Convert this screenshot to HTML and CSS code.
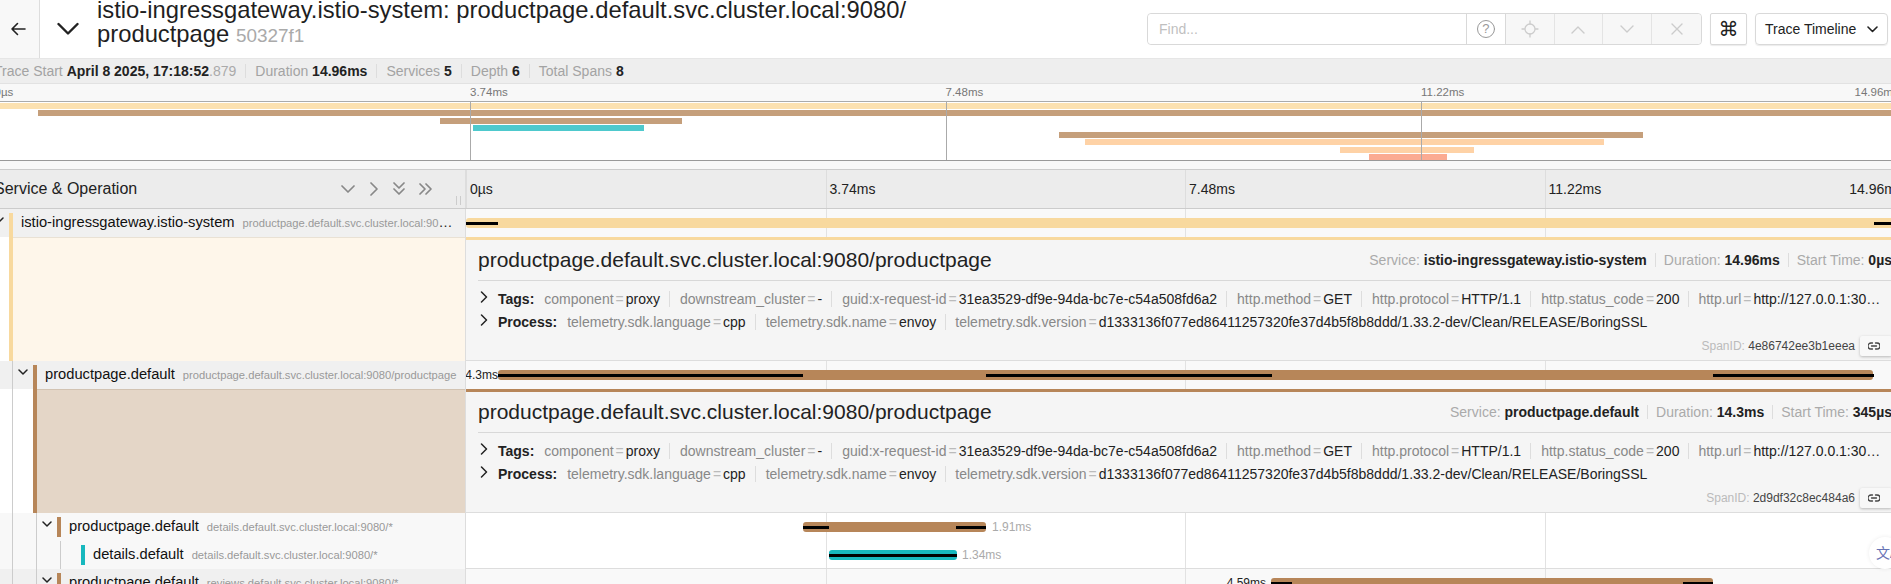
FILE: index.html
```html
<!DOCTYPE html>
<html lang="en">
<head>
<meta charset="utf-8">
<title>Trace Timeline</title>
<link rel="stylesheet" href="styles.css">
</head>
<body>
<div class="page">
  <header class="top">
    <a class="back"><svg width="16" height="14" viewBox="0 0 16 14"><path d="M15 7H2M7.5 1.5 2 7l5.5 5.5" class="ic" stroke="#222" stroke-width="1.6"/></svg></a>
    <span class="collapse"><svg width="22" height="14" viewBox="0 0 22 14"><path d="M1.5 2 11 11.5 20.5 2" class="ic" stroke="#222" stroke-width="2.4"/></svg></span>
    <h1 class="title">istio-ingressgateway.istio-system: productpage.default.svc.cluster.local:9080/<br>productpage <small class="trace-id">50327f1</small></h1>
    <div class="find">
      <span class="find-input">Find...</span>
      <span class="find-help"><svg width="20" height="20" viewBox="0 0 20 20"><circle cx="10" cy="10" r="8.5" class="ic" stroke="#999"/></svg><i class="qmark">?</i></span>
      <span class="find-btn wide"><svg width="18" height="18" viewBox="0 0 18 18"><path d="M9 1v3M9 14v3M1 9h2.500M14.500 9H17" class="ic" stroke="#ccc" stroke-width="1.300"/><circle cx="9" cy="9" r="5" class="ic" stroke="#ccc" stroke-width="1.300"/></svg></span>
      <span class="find-btn wide"><svg width="14" height="9" viewBox="0 0 14 9"><path d="M1 8 7 2l6 6" class="ic" stroke="#ccc" stroke-width="1.400"/></svg></span>
      <span class="find-btn wide"><svg width="14" height="9" viewBox="0 0 14 9"><path d="M1 1l6 6 6-6" class="ic" stroke="#ccc" stroke-width="1.400"/></svg></span>
      <span class="find-btn wide last"><svg width="12" height="12" viewBox="0 0 12 12"><path d="M1 1l10 10M11 1 1 11" class="ic" stroke="#ccc" stroke-width="1.400"/></svg></span>
    </div>
    <span class="cmd">⌘</span>
    <span class="view-select">Trace Timeline<svg width="11" height="7" viewBox="0 0 11 7"><path d="M1 1l4.500 4.500L10 1" class="ic" stroke="#222" stroke-width="1.600"/></svg></span>
  </header>

  <div class="summary">
    <span class="fact">Trace Start <b>April 8 2025, 17:18:52</b><span class="ms">.879</span></span>
    <span class="fact">Duration <b>14.96ms</b></span>
    <span class="fact">Services <b>5</b></span>
    <span class="fact">Depth <b>6</b></span>
    <span class="fact last">Total Spans <b>8</b></span>
  </div>

  <div class="mini">
    <div class="mini-ticks">
      <span class="mini-tick">0µs</span><span class="mini-tick">3.74ms</span><span class="mini-tick">7.48ms</span><span class="mini-tick">11.22ms</span><span class="mini-tick end">14.96ms</span>
    </div>
    <div class="mini-canvas">
      <i class="mini-line q1"></i><i class="mini-line q2"></i><i class="mini-line q3"></i>
      <div class="mini-bar c-gold" style="margin-left:0;width:100%"></div>
      <div class="mini-bar c-brown" style="margin-left:2.3%;width:97.89%"></div>
      <div class="mini-bar c-brown" style="margin-left:23.42%;width:12.75%"></div>
      <div class="mini-bar c-teal" style="margin-left:25.17%;width:8.99%"></div>
      <div class="mini-bar c-brown" style="margin-left:55.96%;width:30.7%"></div>
      <div class="mini-bar c-peach" style="margin-left:57.33%;width:27.3%"></div>
      <div class="mini-bar c-peach" style="margin-left:70.75%;width:7.05%"></div>
      <div class="mini-bar c-salmon" style="margin-left:72.27%;width:4.1%"></div>
    </div>
    <div class="mini-foot"></div>
  </div>

  <div class="tl-head">
    <div class="tl-head-left">
      <h3 class="tl-title">Service &amp; Operation</h3>
      <span class="tl-tools">
        <svg width="14" height="10" viewBox="0 0 14 10"><path d="M1 2l6 6 6-6" class="ic" stroke="#888" stroke-width="1.700"/></svg>
        <svg width="10" height="14" viewBox="0 0 10 14"><path d="M2 1l6 6-6 6" class="ic" stroke="#888" stroke-width="1.700"/></svg>
        <svg width="12" height="14" viewBox="0 0 12 14"><path d="M1 1l5 5 5-5M1 7l5 5 5-5" class="ic" stroke="#888" stroke-width="1.700"/></svg>
        <svg width="14" height="12" viewBox="0 0 14 12"><path d="M1 1l5 5-5 5M7 1l5 5-5 5" class="ic" stroke="#888" stroke-width="1.700"/></svg>
      </span>
      <i class="resizer"></i>
    </div>
    <div class="tl-head-right">
      <span class="tl-tick">0µs</span><span class="tl-tick">3.74ms</span><span class="tl-tick">7.48ms</span><span class="tl-tick">11.22ms</span>
      <span class="tl-tick-end">14.96ms</span>
    </div>
  </div>

  <div class="row shade">
    <div class="left">
      <span class="toggle"><svg width="10" height="7" viewBox="0 0 10 7"><path d="M1 1l4 4 4-4" class="ic" stroke="#222" stroke-width="1.500"/></svg></span>
      <i class="marker open c-gold-solid"></i>
      <span class="label"><span class="name">istio-ingressgateway.istio-system</span><span class="op">productpage.default.svc.cluster.local:9080/productpage</span></span>
    </div>
    <div class="right alt">
      <i class="grid g1"></i><i class="grid g2"></i><i class="grid g3"></i>
      <div class="bar c-gold-solid" style="left:0;width:1438px"></div>
      <i class="crit" style="left:0;width:32px"></i>
      <i class="crit" style="left:1408px;width:30px"></i>
    </div>
  </div>
  <div class="row detail-row">
    <div class="left detail-left">
      <span class="toggle"></span>
      <i class="marker full c-gold-solid"></i>
      <span class="fill fill-gold"></span>
    </div>
    <div class="detail b-gold">
      <div class="d-head">
        <h2 class="d-title">productpage.default.svc.cluster.local:9080/productpage</h2>
        <div class="d-meta">
          <span class="meta">Service: <b>istio-ingressgateway.istio-system</b></span>
          <span class="meta">Duration: <b>14.96ms</b></span>
          <span class="meta last">Start Time: <b>0µs</b></span>
        </div>
      </div>
      <div class="kv">
        <svg class="kv-chev" width="8" height="12" viewBox="0 0 8 12"><path d="M1.500 1l5 5-5 5" class="ic" stroke="#222" stroke-width="1.500"/></svg>
        <b class="kv-label">Tags:</b>
        <span class="pair"><em>component</em><u>=</u>proxy</span>
        <span class="pair"><em>downstream_cluster</em><u>=</u>-</span>
        <span class="pair"><em>guid:x-request-id</em><u>=</u>31ea3529-df9e-94da-bc7e-c54a508fd6a2</span>
        <span class="pair"><em>http.method</em><u>=</u>GET</span>
        <span class="pair"><em>http.protocol</em><u>=</u>HTTP/1.1</span>
        <span class="pair"><em>http.status_code</em><u>=</u>200</span>
        <span class="pair last"><em>http.url</em><u>=</u>http://127.0.0.1:30…</span>
      </div>
      <div class="kv">
        <svg class="kv-chev" width="8" height="12" viewBox="0 0 8 12"><path d="M1.500 1l5 5-5 5" class="ic" stroke="#222" stroke-width="1.500"/></svg>
        <b class="kv-label">Process:</b>
        <span class="pair"><em>telemetry.sdk.language</em><u>=</u>cpp</span>
        <span class="pair"><em>telemetry.sdk.name</em><u>=</u>envoy</span>
        <span class="pair last"><em>telemetry.sdk.version</em><u>=</u>d1333136f077ed86411257320fe37d4b5f8b8ddd/1.33.2-dev/Clean/RELEASE/BoringSSL</span>
      </div>
      <div class="d-foot">
        <span class="span-id"><span class="span-id-key">SpanID:</span> 4e86742ee3b1eeea</span>
        <span class="link-btn"><svg width="12" height="8" viewBox="0 0 12 8"><path d="M4.500 1H3a3 3 0 0 0 0 6h1.500M7.500 1H9a3 3 0 0 1 0 6H7.500M3.500 4h5" class="ic" stroke="#444" stroke-width="1.300"/></svg></span>
      </div>
    </div>
  </div>

  <div class="row shade">
    <div class="left">
      <i class="guide"></i>
      <span class="toggle"><svg width="10" height="7" viewBox="0 0 10 7"><path d="M1 1l4 4 4-4" class="ic" stroke="#222" stroke-width="1.500"/></svg></span>
      <i class="marker open c-brown-solid"></i>
      <span class="label"><span class="name">productpage.default</span><span class="op">productpage.default.svc.cluster.local:9080/productpage</span></span>
    </div>
    <div class="right alt">
      <i class="grid g1"></i><i class="grid g2"></i><i class="grid g3"></i>
      <span class="dur dark" style="right:1406px">14.3ms</span>
      <div class="bar c-brown-solid" style="left:32px;width:1375px"></div>
      <i class="crit" style="left:32px;width:305px"></i>
      <i class="crit" style="left:520px;width:286px"></i>
      <i class="crit" style="left:1247px;width:161px"></i>
    </div>
  </div>
  <div class="row detail-row">
    <div class="left detail-left">
      <i class="guide"></i>
      <span class="toggle"></span>
      <i class="marker full c-brown-solid"></i>
      <span class="fill fill-brown"></span>
    </div>
    <div class="detail b-brown">
      <div class="d-head">
        <h2 class="d-title">productpage.default.svc.cluster.local:9080/productpage</h2>
        <div class="d-meta">
          <span class="meta">Service: <b>productpage.default</b></span>
          <span class="meta">Duration: <b>14.3ms</b></span>
          <span class="meta last">Start Time: <b>345µs</b></span>
        </div>
      </div>
      <div class="kv">
        <svg class="kv-chev" width="8" height="12" viewBox="0 0 8 12"><path d="M1.500 1l5 5-5 5" class="ic" stroke="#222" stroke-width="1.500"/></svg>
        <b class="kv-label">Tags:</b>
        <span class="pair"><em>component</em><u>=</u>proxy</span>
        <span class="pair"><em>downstream_cluster</em><u>=</u>-</span>
        <span class="pair"><em>guid:x-request-id</em><u>=</u>31ea3529-df9e-94da-bc7e-c54a508fd6a2</span>
        <span class="pair"><em>http.method</em><u>=</u>GET</span>
        <span class="pair"><em>http.protocol</em><u>=</u>HTTP/1.1</span>
        <span class="pair"><em>http.status_code</em><u>=</u>200</span>
        <span class="pair last"><em>http.url</em><u>=</u>http://127.0.0.1:30…</span>
      </div>
      <div class="kv">
        <svg class="kv-chev" width="8" height="12" viewBox="0 0 8 12"><path d="M1.500 1l5 5-5 5" class="ic" stroke="#222" stroke-width="1.500"/></svg>
        <b class="kv-label">Process:</b>
        <span class="pair"><em>telemetry.sdk.language</em><u>=</u>cpp</span>
        <span class="pair"><em>telemetry.sdk.name</em><u>=</u>envoy</span>
        <span class="pair last"><em>telemetry.sdk.version</em><u>=</u>d1333136f077ed86411257320fe37d4b5f8b8ddd/1.33.2-dev/Clean/RELEASE/BoringSSL</span>
      </div>
      <div class="d-foot">
        <span class="span-id"><span class="span-id-key">SpanID:</span> 2d9df32c8ec484a6</span>
        <span class="link-btn"><svg width="12" height="8" viewBox="0 0 12 8"><path d="M4.500 1H3a3 3 0 0 0 0 6h1.500M7.500 1H9a3 3 0 0 1 0 6H7.500M3.500 4h5" class="ic" stroke="#444" stroke-width="1.300"/></svg></span>
      </div>
    </div>
  </div>

  <div class="row light">
    <div class="left">
      <i class="guide"></i><i class="guide"></i>
      <span class="toggle"><svg width="10" height="7" viewBox="0 0 10 7"><path d="M1 1l4 4 4-4" class="ic" stroke="#222" stroke-width="1.500"/></svg></span>
      <i class="marker c-brown-solid"></i>
      <span class="label"><span class="name">productpage.default</span><span class="op">details.default.svc.cluster.local:9080/*</span></span>
    </div>
    <div class="right">
      <i class="grid g1"></i><i class="grid g2"></i><i class="grid g3"></i>
      <div class="bar c-brown-solid" style="left:337px;width:183px"></div>
      <i class="crit" style="left:337px;width:26px"></i>
      <i class="crit" style="left:490px;width:30px"></i>
      <span class="dur" style="left:526px">1.91ms</span>
    </div>
  </div>
  <div class="row light edge">
    <div class="left">
      <i class="guide"></i><i class="guide"></i><i class="guide"></i>
      <span class="toggle"></span>
      <i class="marker c-teal-solid"></i>
      <span class="label"><span class="name">details.default</span><span class="op">details.default.svc.cluster.local:9080/*</span></span>
    </div>
    <div class="right">
      <i class="grid g1"></i><i class="grid g2"></i><i class="grid g3"></i>
      <div class="bar c-teal-solid" style="left:363px;width:128px"></div>
      <i class="crit" style="left:363px;width:128px"></i>
      <span class="dur" style="left:496px">1.34ms</span>
    </div>
  </div>
  <div class="row shade">
    <div class="left">
      <i class="guide"></i><i class="guide"></i>
      <span class="toggle"><svg width="10" height="7" viewBox="0 0 10 7"><path d="M1 1l4 4 4-4" class="ic" stroke="#222" stroke-width="1.500"/></svg></span>
      <i class="marker c-brown-solid"></i>
      <span class="label"><span class="name">productpage.default</span><span class="op">reviews.default.svc.cluster.local:9080/*</span></span>
    </div>
    <div class="right">
      <i class="grid g1"></i><i class="grid g2"></i><i class="grid g3"></i>
      <span class="dur dark" style="right:638px">4.59ms</span>
      <div class="bar c-brown-solid" style="left:805px;width:442px"></div>
      <i class="crit" style="left:805px;width:21px"></i>
      <i class="crit" style="left:1217px;width:30px"></i>
    </div>
  </div>

  <div class="translate"><span class="translate-glyph">文A</span></div>
</div>
</body>
</html>
```
FILE: styles.css
```css
* { box-sizing: border-box; }
html, body { margin: 0; padding: 0; height: 100%; overflow: hidden; background: #fff; }
body { font-family: "Liberation Sans", Arial, sans-serif; font-size: 14px; color: #222; }
.page { position: relative; width: 1891px; height: 584px; overflow: hidden; }
.ic { fill: none; stroke-linecap: round; stroke-linejoin: round; }

/* header */
.top { display: flex; align-items: center; height: 59px; border-bottom: 1px solid #e6e6e6; overflow: hidden; }
.back { display: flex; align-items: center; justify-content: center; flex: none; width: 40px; height: 58px; padding-right: 3px; background: #f8f8f8; border-right: 1px solid #ddd; }
.collapse { display: flex; flex: none; width: 57px; padding-left: 17px; }
.title { align-self: flex-start; flex: none; width: 1050px; margin: -2px 0 0; font-size: 23.8px; line-height: 23.6px; font-weight: 400; color: #1f1f1f; white-space: nowrap; }
.trace-id { font-size: 18.9px; color: #aaa; }
.find { display: flex; flex: none; height: 32px; width: 555px; border: 1px solid #d9d9d9; border-radius: 4px; }
.find-input { display: flex; align-items: center; width: 319px; padding-left: 11px; color: #bfbfbf; background: #fff; border-radius: 4px 0 0 4px; }
.find-help { position: relative; display: flex; align-items: center; justify-content: center; width: 40px; border-left: 1px solid #d9d9d9; border-right: 1px solid #d9d9d9; }
.qmark { position: absolute; left: 0; right: 0; text-align: center; top: 7px; font-style: normal; font-size: 13px; color: #999; }
.find-btn { display: flex; align-items: center; justify-content: center; width: 49px; background: #f7f7f7; border-right: 1px solid #e4e4e4; }
.find-btn.last { border-right: 0; border-radius: 0 4px 4px 0; }
.cmd { display: flex; flex: none; align-items: center; justify-content: center; width: 37px; height: 32px; margin-left: 8px; font-family: "DejaVu Sans", sans-serif; font-size: 20px; color: #222; border: 1px solid #d9d9d9; border-radius: 2px; box-shadow: 0 1px 1px rgba(0,0,0,.08); }
.view-select { display: flex; flex: none; align-items: center; justify-content: space-between; width: 133px; height: 32px; margin-left: 8px; padding: 0 9px; color: #222; border: 1px solid #d9d9d9; border-radius: 4px; box-shadow: 0 1px 1px rgba(0,0,0,.08); }

/* summary */
.summary { display: flex; align-items: center; height: 25px; margin-left: -6px; padding-bottom: 1px; color: #a3a3a3; background: #eee; border-bottom: 1px solid #e2e2e2; }
.fact { padding-right: 9px; margin-right: 9px; line-height: 14px; border-right: 1px solid #ddd; white-space: pre; }
.fact.last { border: 0; }
.fact b { color: #222; }
.ms { color: #aaa; }

/* minimap */
.mini { width: 1902px; margin-left: -5.5px; background: #fff; }
.mini-ticks { display: grid; grid-template-columns: repeat(4, 25%) 0; height: 17px; background: #f8f8f8; font-size: 11.5px; line-height: 17px; color: #777; }
.mini-tick { padding-left: 0; white-space: nowrap; }
.mini-tick.end { margin-left: -42px; }
.mini-canvas { position: relative; height: 60px; padding: 1px 0 0; border-top: 1px solid #aaa; border-bottom: 1px solid #999; display: grid; grid-auto-rows: 7.3px; }
.mini-bar { height: 6px; }
.mini-line { position: absolute; top: 0; bottom: 0; width: 1px; background: #aaa; z-index: 1; }
.q1 { left: 25%; } .q2 { left: 50%; } .q3 { left: 75%; }
.mini-foot { height: 9px; background: #f8f8f8; border-bottom: 1px solid #ccc; }
.c-gold { background: #fce1b0; }
.c-brown { background: #c59f7b; }
.c-teal { background: #4ec9cd; }
.c-peach { background: #fed2a6; }
.c-salmon { background: #fbab92; }
.c-gold-solid { background: #f8d99e; }
.c-brown-solid { background: #b78659; }
.c-teal-solid { background: #17b8be; }

/* timeline header */
.tl-head { display: grid; grid-template-columns: 466px 1438px; height: 39px; background: #ececec; border-bottom: 1px solid #ccc; }
.tl-head-left { position: relative; display: flex; align-items: center; justify-content: space-between; margin-left: -6px; padding-right: 32px; border-right: 1px solid #ddd; }
.tl-title { margin: 0; font-size: 16px; font-weight: 400; color: #222; }
.tl-tools { display: flex; align-items: center; gap: 14px; }
.resizer { position: absolute; right: 4px; bottom: 3px; width: 5px; height: 9px; border-left: 1px solid #ccc; border-right: 1px solid #ccc; }
.tl-head-right { position: relative; display: grid; grid-template-columns: repeat(4, 25%); align-items: center; }
.tl-tick { height: 100%; display: flex; align-items: center; padding-left: 3px; font-size: 14px; border-left: 1px solid #ddd; color: #222; }
.tl-tick-end { position: absolute; right: 1px; font-size: 14px; }

/* rows */
.row { display: grid; grid-template-columns: 466px 1438px; height: 28px; }
.left { display: flex; align-items: stretch; min-width: 0; margin-left: -11px; border-right: 1px solid #ddd; overflow: hidden; }
.shade .left { background: #f0f0f0; }
.light .left { background: #f8f8f8; }
.guide { flex: none; width: 24px; border-right: 1px solid #ccc; }
.toggle { display: flex; flex: none; align-items: center; justify-content: center; width: 20px; padding: 0 1px 5px 0; }
.marker { flex: none; width: 4px; margin: 4px 0; }
.marker.open { margin-bottom: 0; }
.marker.full { margin: 0; }
.label { flex: 1; min-width: 0; padding: 0 7px 2px 8px; line-height: 27px; overflow: hidden; text-overflow: ellipsis; white-space: nowrap; }
.name { font-size: 14.7px; color: #111; }
.op { margin-left: 8px; font-size: 11.2px; color: #999; }
.right { position: relative; overflow: hidden; background: #fff; }
.right.alt, .shade .right { background: #f9f9f9; }
.edge .right { border-bottom: 1px solid #ddd; }
.grid { position: absolute; top: 0; bottom: 0; width: 1px; background: #e2e2e2; }
.g1 { left: 25%; } .g2 { left: 50%; } .g3 { left: 75%; }
.bar { position: absolute; top: 9px; height: 10px; border-radius: 3px; }
.crit { position: absolute; top: 13px; height: 3px; background: #000; }
.dur { position: absolute; top: 7px; font-size: 12px; line-height: 14px; color: #aaa; }
.dur.dark { color: #222; }

/* detail */
.detail-row { height: 124px; }
.detail-left { background: #fff; }
.fill { flex: 1; }
.fill-gold { background: #fef6ea; border-top: 1px solid #e9e1d4; }
.fill-brown { background: #e4d6c7; border-top: 1px solid #d2c3b2; }
.detail { display: flex; flex-direction: column; padding: 0 12px; background: #f5f5f5; border-top: 3px solid; border-bottom: 1px solid #ddd; }
.b-gold { border-top-color: #f8d99e; }
.b-brown { border-top-color: #b78659; }
.d-head { display: flex; flex: none; align-items: center; justify-content: space-between; height: 41px; border-bottom: 1px solid #d8d8d8; }
.d-title { margin: 0; font-size: 21px; font-weight: 400; color: #222; white-space: nowrap; }
.d-meta { display: flex; white-space: nowrap; color: #aaa; }
.meta { padding-right: 8px; margin-right: 8px; line-height: 14px; border-right: 1px solid #ddd; }
.meta.last { padding: 0; margin: 0; border: 0; }
.meta b { color: #222; }
.kv { display: flex; align-items: center; flex: none; height: 23px; white-space: nowrap; color: #222; }
.d-head + .kv { margin-top: 6px; }
.kv-chev { flex: none; margin: -4px 10px 0 2px; }
.kv-label { margin-right: 9px; }
.pair { padding: 0 9px 0 1px; margin-right: 9px; line-height: 16px; border-right: 1px solid #ddd; }
.pair.last { padding: 0; margin: 0; border: 0; }
.pair em { font-style: normal; color: #888; }
.pair u { margin: 0 2px; text-decoration: none; color: #bbb; }
.d-foot { display: flex; align-items: center; justify-content: flex-end; height: 20px; margin-top: auto; margin-bottom: 4px; }
.span-id { margin-right: 5px; font-size: 12px; color: #444; }
.span-id-key { color: #bbb; }
.link-btn { display: flex; align-items: center; justify-content: center; width: 32px; height: 20px; padding-right: 4px; background: #f8f8f8; border-radius: 2px; box-shadow: 0 1px 3px rgba(0,0,0,.25); }

/* translate bubble */
.translate { position: absolute; left: 1869px; top: 537px; width: 32px; height: 32px; padding: 7px 0 0 7px; background: #fff; border-radius: 50%; overflow: hidden; box-shadow: 0 0 4px rgba(0,0,0,.08); }
.translate-glyph { display: block; font-family: "Noto Sans CJK SC", sans-serif; font-size: 14px; line-height: 16px; color: #6672b4; white-space: nowrap; }
```
